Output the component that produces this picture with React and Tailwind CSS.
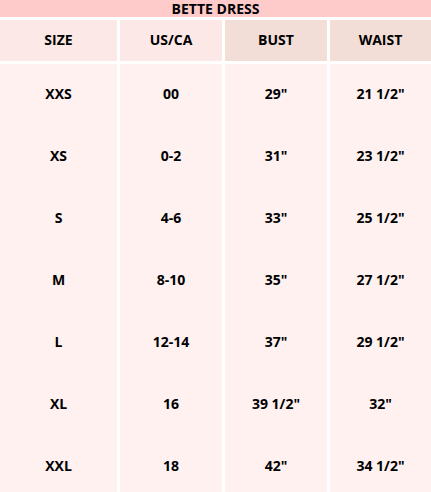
const rows = [
  ["XXS", "00", '29"', '21 1/2"'],
  ["XS", "0-2", '31"', '23 1/2"'],
  ["S", "4-6", '33"', '25 1/2"'],
  ["M", "8-10", '35"', '27 1/2"'],
  ["L", "12-14", '37"', '29 1/2"'],
  ["XL", "16", '39 1/2"', '32"'],
  ["XXL", "18", '42"', '34 1/2"'],
];

const cols = "grid grid-cols-[117px_102px_102px_1fr] gap-x-[3px]";

export default function App() {
  return (
    <div
      className="w-[431px] h-[492px] overflow-hidden bg-white text-black font-bold text-[14px]"
      style={{ fontFamily: '"Open Sans", Tahoma, sans-serif' }}
    >
      <div className="h-[17px] bg-[#ffcaca] flex items-center justify-center leading-none">
        BETTE DRESS
      </div>
      <div className={`${cols} mt-[3px] h-[41px]`}>
        <div className="bg-[#fce9e7] flex items-center justify-center pb-[2px]">SIZE</div>
        <div className="bg-[#fce9e7] flex items-center justify-center pb-[2px]">US/CA</div>
        <div className="bg-[#f2ddd7] flex items-center justify-center pb-[2px]">BUST</div>
        <div className="bg-[#f2ddd7] flex items-center justify-center pb-[2px]">WAIST</div>
      </div>
      <div className={`${cols} mt-[3px]`}>
        {rows.map((r) =>
          r.map((c, i) => (
            <div
              key={r[0] + i}
              className="bg-[#fef1f0] h-[62px] flex items-center justify-center pb-[4px]"
            >
              {c}
            </div>
          ))
        )}
      </div>
    </div>
  );
}
